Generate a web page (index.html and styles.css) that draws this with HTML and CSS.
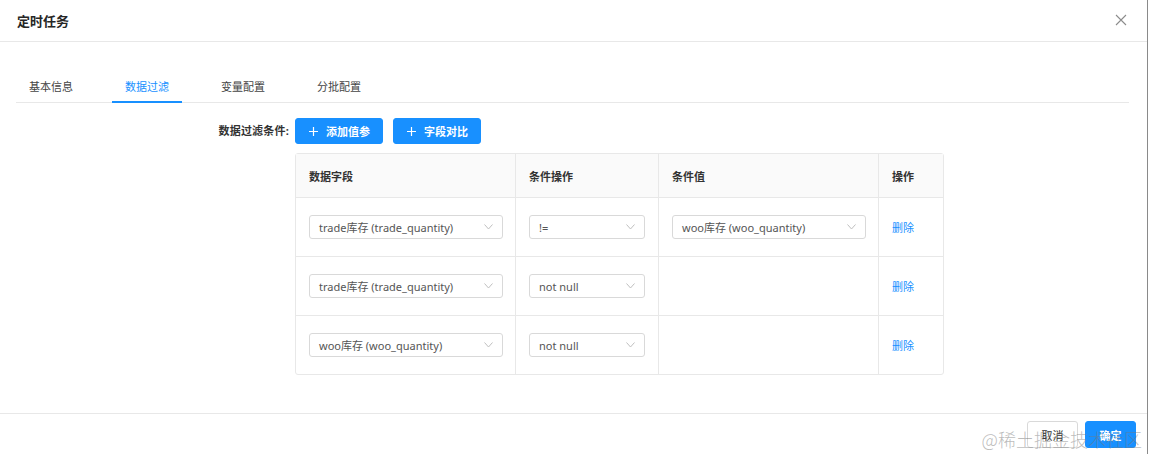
FILE: index.html
```html
<!DOCTYPE html>
<html lang="zh-CN">
<head>
<meta charset="utf-8">
<title>定时任务</title>
<link rel="stylesheet" href="styles.css">
</head>
<body>
<div class="dialog">
  <header class="dlg-head">
    <div class="dlg-title">定时任务</div>
    <svg class="close" width="12" height="12" viewBox="0 0 12 12"><path d="M1 1L11 11M11 1L1 11" stroke="#8c8c8c" stroke-width="1.1" fill="none"/></svg>
  </header>
  <main class="dlg-body">
    <nav class="tabs">
      <div class="tab">基本信息</div>
      <div class="tab active">数据过滤</div>
      <div class="tab">变量配置</div>
      <div class="tab">分批配置</div>
    </nav>
    <div class="form-row">
      <div class="form-label">数据过滤条件:</div>
      <div class="form-ctrl">
        <div class="btns">
          <button class="btn primary"><svg class="plus" width="9" height="9" viewBox="0 0 9 9"><path d="M4.5 0V9M0 4.5H9" stroke="#fff" stroke-width="1.2"/></svg>添加值参</button>
          <button class="btn primary"><svg class="plus" width="9" height="9" viewBox="0 0 9 9"><path d="M4.5 0V9M0 4.5H9" stroke="#fff" stroke-width="1.2"/></svg>字段对比</button>
        </div>
        <table class="grid">
          <colgroup><col class="c1"><col class="c2"><col class="c3"><col class="c4"></colgroup>
          <thead>
            <tr><th>数据字段</th><th>条件操作</th><th>条件值</th><th>操作</th></tr>
          </thead>
          <tbody>
            <tr>
              <td><div class="select wide"><span>trade库存 (trade_quantity)</span><svg class="arrow" width="9" height="6" viewBox="0 0 9 6"><path d="M0.5 0.5L4.5 5L8.5 0.5" stroke="#bfbfbf" fill="none"/></svg></div></td>
              <td><div class="select narrow"><span>!=</span><svg class="arrow" width="9" height="6" viewBox="0 0 9 6"><path d="M0.5 0.5L4.5 5L8.5 0.5" stroke="#bfbfbf" fill="none"/></svg></div></td>
              <td><div class="select wide"><span>woo库存 (woo_quantity)</span><svg class="arrow" width="9" height="6" viewBox="0 0 9 6"><path d="M0.5 0.5L4.5 5L8.5 0.5" stroke="#bfbfbf" fill="none"/></svg></div></td>
              <td><a class="link">删除</a></td>
            </tr>
            <tr>
              <td><div class="select wide"><span>trade库存 (trade_quantity)</span><svg class="arrow" width="9" height="6" viewBox="0 0 9 6"><path d="M0.5 0.5L4.5 5L8.5 0.5" stroke="#bfbfbf" fill="none"/></svg></div></td>
              <td><div class="select narrow"><span>not null</span><svg class="arrow" width="9" height="6" viewBox="0 0 9 6"><path d="M0.5 0.5L4.5 5L8.5 0.5" stroke="#bfbfbf" fill="none"/></svg></div></td>
              <td></td>
              <td><a class="link">删除</a></td>
            </tr>
            <tr>
              <td><div class="select wide"><span>woo库存 (woo_quantity)</span><svg class="arrow" width="9" height="6" viewBox="0 0 9 6"><path d="M0.5 0.5L4.5 5L8.5 0.5" stroke="#bfbfbf" fill="none"/></svg></div></td>
              <td><div class="select narrow"><span>not null</span><svg class="arrow" width="9" height="6" viewBox="0 0 9 6"><path d="M0.5 0.5L4.5 5L8.5 0.5" stroke="#bfbfbf" fill="none"/></svg></div></td>
              <td></td>
              <td><a class="link">删除</a></td>
            </tr>
          </tbody>
        </table>
      </div>
    </div>
  </main>
  <footer class="dlg-foot">
    <button class="btn default">取消</button>
    <button class="btn primary ok">确定</button>
    <div class="watermark">@稀土掘金技术社区</div>
  </footer>
</div>
</body>
</html>
```

FILE: styles.css
```css
html, body {
  margin: 0;
  padding: 0;
  background: #fff;
}
body {
  font-family: "Noto Sans", "Noto Sans CJK SC", sans-serif;
  font-size: 11px;
  color: #333;
}
.dialog {
  width: 1148px;
  height: 454px;
  border-right: 1px solid #8a8a8a;
  box-sizing: border-box;
  position: relative;
  display: flex;
  flex-direction: column;
}
.dlg-head {
  height: 41px;
  border-bottom: 1px solid #e8e8e8;
  display: flex;
  align-items: center;
  justify-content: space-between;
  padding: 0 16px 0 17px;
  flex-shrink: 0;
}
.dlg-title {
  font-size: 13px;
  font-weight: 700;
  color: #262626;
  margin-top: -1px;
}
.close {
  margin-top: -1px;
  margin-right: 4px;
}
.dlg-body {
  flex: 1;
  padding: 0 18px 0 16px;
}
.tabs {
  display: flex;
  gap: 26px;
  margin-top: 26px;
  border-bottom: 1px solid #e8e8e8;
}
.tab {
  height: 35px;
  line-height: 38px;
  padding: 0 13px;
  font-size: 11px;
  color: #444;
  box-sizing: border-box;
  border-bottom: 2px solid transparent;
  margin-bottom: -1px;
}
.tab.active {
  color: #1890ff;
  border-bottom-color: #1890ff;
}
.form-row {
  display: flex;
  margin-top: 15px;
}
.form-label {
  text-align: right;
  font-weight: 700;
  color: #333;
  line-height: 26px;
  padding-right: 6px;
  box-sizing: border-box;
  width: 279px;
  letter-spacing: 0.2px;
}
.form-ctrl {
  display: flex;
  flex-direction: column;
}
.btns {
  display: flex;
  gap: 10px;
}
.btn {
  font-family: inherit;
  font-size: 11px;
  height: 26px;
  border-radius: 3px;
  cursor: pointer;
  display: inline-flex;
  align-items: center;
  box-sizing: border-box;
}
.btn.primary {
  background: #1890ff;
  border: 1px solid #1890ff;
  color: #fff;
  font-weight: 700;
  padding: 0 12px 0 13px;
}
.plus {
  margin-right: 8px;
}
.grid {
  margin-top: 9px;
  border-collapse: separate;
  border-spacing: 0;
  border: 1px solid #e8e8e8;
  border-radius: 3px;
  table-layout: fixed;
  width: 648px;
}
.c1 { width: 220px; }
.c2 { width: 143px; }
.c3 { width: 220px; }
.c4 { width: 64px; }
.grid th {
  height: 43px;
  background: #fafafa;
  text-align: left;
  font-weight: 700;
  color: #333;
  padding: 0 13px;
  border-bottom: 1px solid #e8e8e8;
  border-right: 1px solid #e8e8e8;
}
.grid td {
  height: 58px;
  padding: 0 13px;
  border-bottom: 1px solid #e8e8e8;
  border-right: 1px solid #e8e8e8;
  vertical-align: middle;
}
.grid th:last-child, .grid td:last-child { border-right: none; }
.grid tbody tr:last-child td { border-bottom: none; }
.select {
  height: 24px;
  border: 1px solid #d9d9d9;
  border-radius: 3px;
  box-sizing: border-box;
  display: flex;
  align-items: center;
  justify-content: space-between;
  padding: 0 9px 0 9px;
  color: #555;
  font-size: 11px;
}
.select.wide { width: 194px; }
.select.narrow { width: 116px; }
.link {
  color: #1890ff;
  cursor: pointer;
}
.dlg-foot {
  height: 41px;
  border-top: 1px solid #e8e8e8;
  display: flex;
  justify-content: flex-end;
  align-items: flex-start;
  gap: 7px;
  padding: 7px 11px 0 0;
  box-sizing: border-box;
  position: relative;
  flex-shrink: 0;
}
.btn.default {
  height: 27px;
  width: 51px;
  justify-content: center;
  background: #fff;
  border: 1px solid #d9d9d9;
  color: #333;
  padding: 0;
}
.btn.ok {
  height: 27px;
  width: 51px;
  justify-content: center;
  padding: 0;
}
.watermark {
  position: absolute;
  right: 5px;
  top: 12px;
  z-index: 1;
  font-family: "Noto Sans CJK SC", sans-serif;
  font-weight: 300;
  font-size: 18px;
  color: rgba(120, 120, 120, 0.5);
  pointer-events: none;
  white-space: nowrap;
}
```
